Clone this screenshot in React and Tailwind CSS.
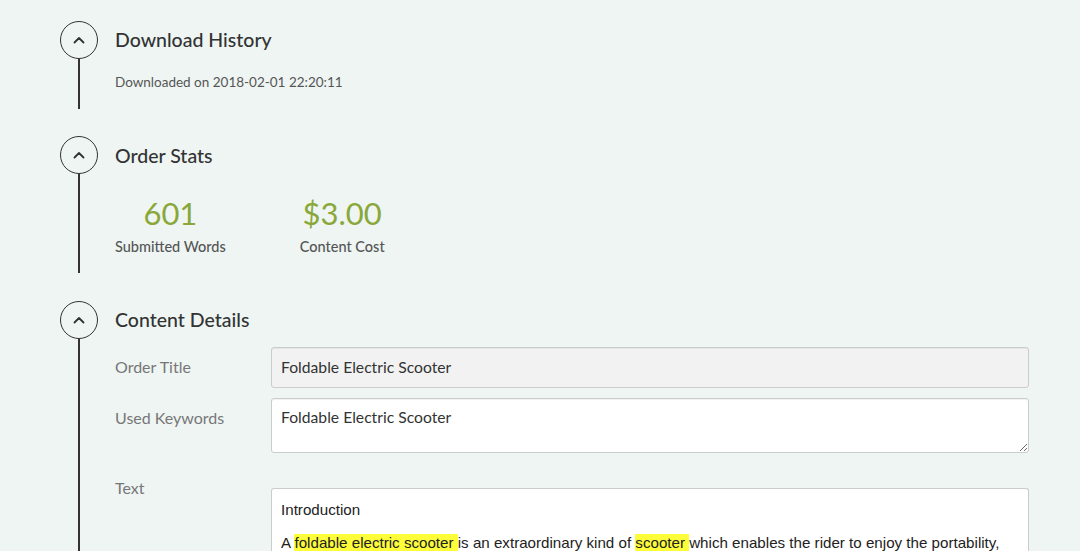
import React from "react";

const ChevronUp = () => (
  <svg width="12" height="8" viewBox="0 0 12 8" fill="none">
    <polyline points="1.5,6.5 6,2 10.5,6.5" stroke="#333" strokeWidth="1.8" strokeLinecap="round" strokeLinejoin="round" />
  </svg>
);

// one timeline step: circle + line on the left, body on the right
const Step = ({ title, children }) => (
  <div className="flex">
    <div className="flex w-[38px] flex-col items-center">
      <div className="flex h-[38px] w-[38px] shrink-0 items-center justify-center rounded-full border-[1.5px] border-[#333]">
        <ChevronUp />
      </div>
      <div className="w-[2px] flex-1 bg-[#333]"></div>
    </div>
    <div className="ml-[17px] flex-1">
      <div className="flex h-[38px] items-center text-[19.5px] font-medium text-[#333]">{title}</div>
      {children}
    </div>
  </div>
);

const Hl = ({ children }) => <span className="bg-[#fdfd3a]">{children}</span>;

export default function App() {
  return (
    <div className="min-h-[551px] bg-[#eef5f3] pl-[60px] pr-[51px] pt-[21px] font-['Lato','Open_Sans',sans-serif]">
      <Step title="Download History">
        <div className="pb-[17px] pt-[13px] text-[13.5px] text-[#555]">Downloaded on 2018-02-01 22:20:11</div>
      </Step>

      <div className="h-[27px]"></div>

      <Step title="Order Stats">
        <div className="flex gap-[74px] pb-[15px] pt-[19px]">
          <div className="flex flex-col items-center">
            <div className="text-[31px] leading-[40px] text-[#8aa83a]">601</div>
            <div className="mt-[3px] text-[14.5px] font-medium text-[#555]">Submitted Words</div>
          </div>
          <div className="flex flex-col items-center">
            <div className="text-[31px] leading-[40px] text-[#8aa83a]">$3.00</div>
            <div className="mt-[3px] text-[14.5px] font-medium text-[#555]">Content Cost</div>
          </div>
        </div>
      </Step>

      <div className="h-[28px]"></div>

      <Step title="Content Details">
        <div className="flex flex-col gap-[10px] pt-[8px]">
          <div className="flex">
            <div className="w-[156px] pt-[8px] text-[16px] text-[#777]">Order Title</div>
            <div className="flex h-[41px] flex-1 items-center rounded-[3px] border border-[#ccc] bg-[#f2f2f2] px-[9px] text-[15.7px] text-[#333] shadow-[inset_0_1px_1px_rgba(0,0,0,0.06)]">
              Foldable Electric Scooter
            </div>
          </div>
          <div className="flex">
            <div className="w-[156px] pt-[8px] text-[16px] text-[#777]">Used Keywords</div>
            <textarea
              readOnly
              value="Foldable Electric Scooter"
              className="h-[55px] flex-1 resize-y rounded-[3px] border border-[#ccc] bg-white px-[9px] pt-[7px] text-[15.7px] text-[#333] shadow-[inset_0_1px_1px_rgba(0,0,0,0.06)] outline-none font-['Lato','Open_Sans',sans-serif]"
            />
          </div>
          <div className="mt-[25px] flex">
            <div className="mt-[-12px] w-[156px] text-[16px] text-[#777]">Text</div>
            <div className="h-[80px] flex-1 rounded-t-[3px] border border-b-0 border-[#ccc] bg-white px-[9px] pt-[11px] font-['Liberation_Sans',Arial,sans-serif] text-[15.15px] text-[#222]">
              <p className="leading-[20px]">Introduction</p>
              <p className="mt-[13px] leading-[20px]">
                A <Hl>foldable electric scooter </Hl>is an extraordinary kind of <Hl>scooter </Hl>which enables the rider to enjoy the portability,
              </p>
            </div>
          </div>
        </div>
      </Step>
    </div>
  );
}
